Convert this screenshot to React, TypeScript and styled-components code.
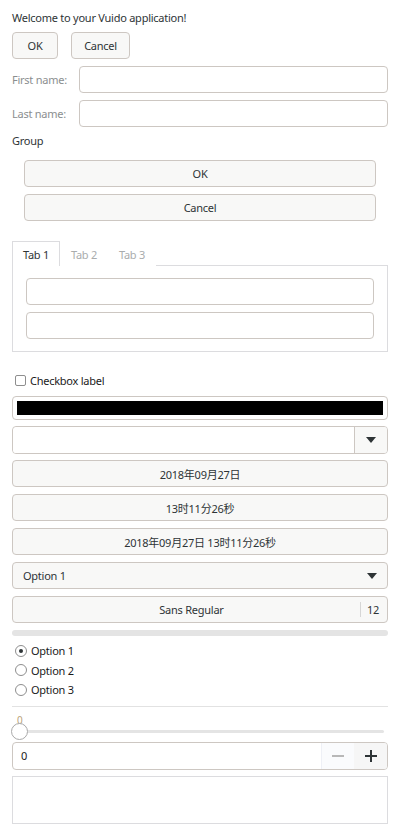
import React from "react";
import styled, { createGlobalStyle } from "styled-components";

const Global = createGlobalStyle`
  html, body { margin: 0; padding: 0; background: #ffffff; }
  body { font-family: "Noto Sans", "Noto Sans CJK SC", sans-serif; font-size: 11px; letter-spacing: -0.25px; color: #2e3436; }
  * { box-sizing: border-box; }
`;

const Page = styled.div`
  width: 400px;
  padding: 9px 12px 0 12px;
  display: flex;
  flex-direction: column;
`;

const Text = styled.div<{ $mt?: number }>`
  height: 18px;
  line-height: 18px;
  margin-top: ${(p) => p.$mt ?? 0}px;
`;

const Row = styled.div<{ $gap?: number; $mt?: number }>`
  display: flex;
  align-items: center;
  gap: ${(p) => p.$gap ?? 0}px;
  margin-top: ${(p) => p.$mt ?? 0}px;
`;

const Button = styled.div<{ $w?: number }>`
  height: 27px;
  ${(p) => (p.$w ? `width: ${p.$w}px; flex: none;` : "flex: 1 1 auto;")}
  border: 1px solid #cdc7c2;
  border-radius: 4px;
  background: #f8f8f7;
  display: flex;
  align-items: center;
  justify-content: center;
  color: #2e3436;
`;

const Stack = styled.div<{ $gap?: number; $mt?: number; $px?: number }>`
  display: flex;
  flex-direction: column;
  gap: ${(p) => p.$gap ?? 7}px;
  margin-top: ${(p) => p.$mt ?? 0}px;
  padding: 0 ${(p) => p.$px ?? 0}px;
`;

const Label = styled.div`
  width: 67px;
  flex: none;
  color: #8b8e8f;
`;

const Entry = styled.div<{ $h?: number; $bare?: boolean }>`
  flex: 1 1 auto;
  height: ${(p) => p.$h ?? 27}px;
  border: ${(p) => (p.$bare ? "none" : "1px solid #cdc7c2")};
  border-radius: 4px;
  background: #ffffff;
`;

const TabBar = styled.div`
  display: flex;
  margin-top: 20px;
  height: 24px;
`;

const Tab = styled.div<{ $active?: boolean }>`
  width: 48px;
  height: 25px;
  display: flex;
  align-items: center;
  justify-content: center;
  color: ${(p) => (p.$active ? "#2e3436" : "#a9acad")};
  border: 1px solid ${(p) => (p.$active ? "#dcdcdf" : "transparent")};
  border-bottom: none;
  background: #fff;
  position: relative;
  z-index: 1;
`;

const TabPanel = styled.div`
  border: 1px solid #dcdcdf;
  padding: 12px 13px;
  display: flex;
  flex-direction: column;
  gap: 7px;
`;

const CheckRow = styled.div`
  display: flex;
  align-items: center;
  gap: 4px;
  margin-top: 20px;
  height: 16px;
  padding-left: 3px;
  color: #1a1a1a;
`;

const CheckBox = styled.div`
  width: 11px;
  height: 11px;
  border: 1px solid #8e8e8e;
  border-radius: 2px;
  background: #fff;
`;

const ColorEntry = styled.div`
  margin-top: 8px;
  height: 24px;
  border: 1px solid #cdc7c2;
  border-radius: 4px;
  padding: 4px;
  background: #fff;
`;

const ColorFill = styled.div`
  height: 100%;
  background: #000;
`;

const Combo = styled.div`
  margin-top: 6px;
  height: 28px;
  border: 1px solid #cdc7c2;
  border-radius: 4px;
  display: flex;
  background: #fff;
  overflow: hidden;
`;

const ComboArrow = styled.div`
  width: 33px;
  border-left: 1px solid #cdc7c2;
  background: #f8f8f7;
  display: flex;
  align-items: center;
  justify-content: center;
`;

const Arrow = () => (
  <svg width="10" height="6" viewBox="0 0 10 6">
    <path d="M0 0 L10 0 L5 6 Z" fill="#2e3436" />
  </svg>
);

const Select = styled(Button)`
  justify-content: space-between;
  padding: 0 10px;
`;

const FontButton = styled(Button)`
  padding: 0 8px 0 10px;
  justify-content: space-between;
`;

const FontName = styled.div`
  flex: 1;
  text-align: center;
`;

const FontSize = styled.div`
  border-left: 1px solid #d6d6d6;
  padding-left: 6px;
  height: 15px;
  line-height: 15px;
`;

const Progress = styled.div`
  margin-top: 7px;
  height: 6px;
  border-radius: 3px;
  background: #e4e4e4;
`;

const Radios = styled.div`
  margin-top: 5px;
  display: flex;
  flex-direction: column;
`;

const RadioRow = styled.div`
  display: flex;
  align-items: center;
  gap: 4px;
  height: 19.5px;
  padding-left: 3px;
  color: #1a1a1a;
`;

const RadioDot = styled.div<{ $on?: boolean }>`
  width: 12px;
  height: 12px;
  border-radius: 50%;
  border: 1px solid #8e8e8e;
  background: #fff;
  display: flex;
  align-items: center;
  justify-content: center;
  &::after {
    content: "";
    width: 4px;
    height: 4px;
    border-radius: 50%;
    background: ${(p) => (p.$on ? "#2e3436" : "transparent")};
  }
`;

const Separator = styled.div`
  margin-top: 6px;
  height: 1px;
  background: #e2e2e2;
`;

const SliderBox = styled.div`
  position: relative;
  height: 35px;
`;

const SliderValue = styled.div`
  position: absolute;
  left: 5px;
  top: 6px;
  font-size: 10px;
  color: #b9a27a;
`;

const SliderTrack = styled.div`
  position: absolute;
  left: 4px;
  right: 4px;
  top: 23px;
  height: 3px;
  border-radius: 2px;
  background: #e4e4e4;
`;

const SliderKnob = styled.div`
  position: absolute;
  left: -1px;
  top: 16px;
  width: 17px;
  height: 17px;
  border-radius: 50%;
  border: 1px solid #a9a9a9;
  background: #fff;
`;

const Spin = styled.div`
  height: 28px;
  border: 1px solid #cdc7c2;
  border-radius: 4px;
  display: flex;
  overflow: hidden;
  background: #fff;
`;

const SpinValue = styled.div`
  flex: 1;
  display: flex;
  align-items: center;
  padding-left: 8px;
  color: #1a1a1a;
`;

const SpinBtn = styled.div<{ $dim?: boolean }>`
  width: 33px;
  border-left: 1px solid ${(p) => (p.$dim ? "#eef0f6" : "transparent")};
  background: ${(p) => (p.$dim ? "#fafbfd" : "#f6f6f6")};
  display: flex;
  align-items: center;
  justify-content: center;
`;

const TextArea = styled.div`
  margin-top: 6px;
  height: 48px;
  border: 1px solid #dcdcdf;
  background: #fff;
`;

export default function App() {
  return (
    <>
      <Global />
      <Page>
        <Text>Welcome to your Vuido application!</Text>
        <Row $gap={13} $mt={5}>
          <Button $w={46}>OK</Button>
          <Button $w={59}>Cancel</Button>
        </Row>
        <Stack $mt={7}>
          <Row>
            <Label>First name:</Label>
            <Entry />
          </Row>
          <Row>
            <Label>Last name:</Label>
            <Entry />
          </Row>
        </Stack>
        <Text $mt={5}>Group</Text>
        <Stack $mt={10} $px={12}>
          <Button>OK</Button>
          <Button>Cancel</Button>
        </Stack>
        <TabBar>
          <Tab $active>Tab 1</Tab>
          <Tab>Tab 2</Tab>
          <Tab>Tab 3</Tab>
        </TabBar>
        <TabPanel>
          <Entry />
          <Entry />
        </TabPanel>
        <CheckRow>
          <CheckBox />
          Checkbox label
        </CheckRow>
        <ColorEntry>
          <ColorFill />
        </ColorEntry>
        <Combo>
          <Entry $bare />
          <ComboArrow>
            <Arrow />
          </ComboArrow>
        </Combo>
        <Stack $mt={6}>
          <Button>2018年09月27日</Button>
          <Button>13时11分26秒</Button>
          <Button>2018年09月27日 13时11分26秒</Button>
          <Select>
            <span>Option 1</span>
            <Arrow />
          </Select>
          <FontButton>
            <FontName>Sans Regular</FontName>
            <FontSize>12</FontSize>
          </FontButton>
        </Stack>
        <Progress />
        <Radios>
          <RadioRow>
            <RadioDot $on />
            Option 1
          </RadioRow>
          <RadioRow>
            <RadioDot />
            Option 2
          </RadioRow>
          <RadioRow>
            <RadioDot />
            Option 3
          </RadioRow>
        </Radios>
        <Separator />
        <SliderBox>
          <SliderValue>0</SliderValue>
          <SliderTrack />
          <SliderKnob />
        </SliderBox>
        <Spin>
          <SpinValue>0</SpinValue>
          <SpinBtn $dim>
            <svg width="12" height="2" viewBox="0 0 12 2">
              <rect width="12" height="2" fill="#b8b8b8" />
            </svg>
          </SpinBtn>
          <SpinBtn>
            <svg width="12" height="12" viewBox="0 0 12 12">
              <rect x="0" y="5" width="12" height="2" fill="#2e3436" />
              <rect x="5" y="0" width="2" height="12" fill="#2e3436" />
            </svg>
          </SpinBtn>
        </Spin>
        <TextArea />
      </Page>
    </>
  );
}
